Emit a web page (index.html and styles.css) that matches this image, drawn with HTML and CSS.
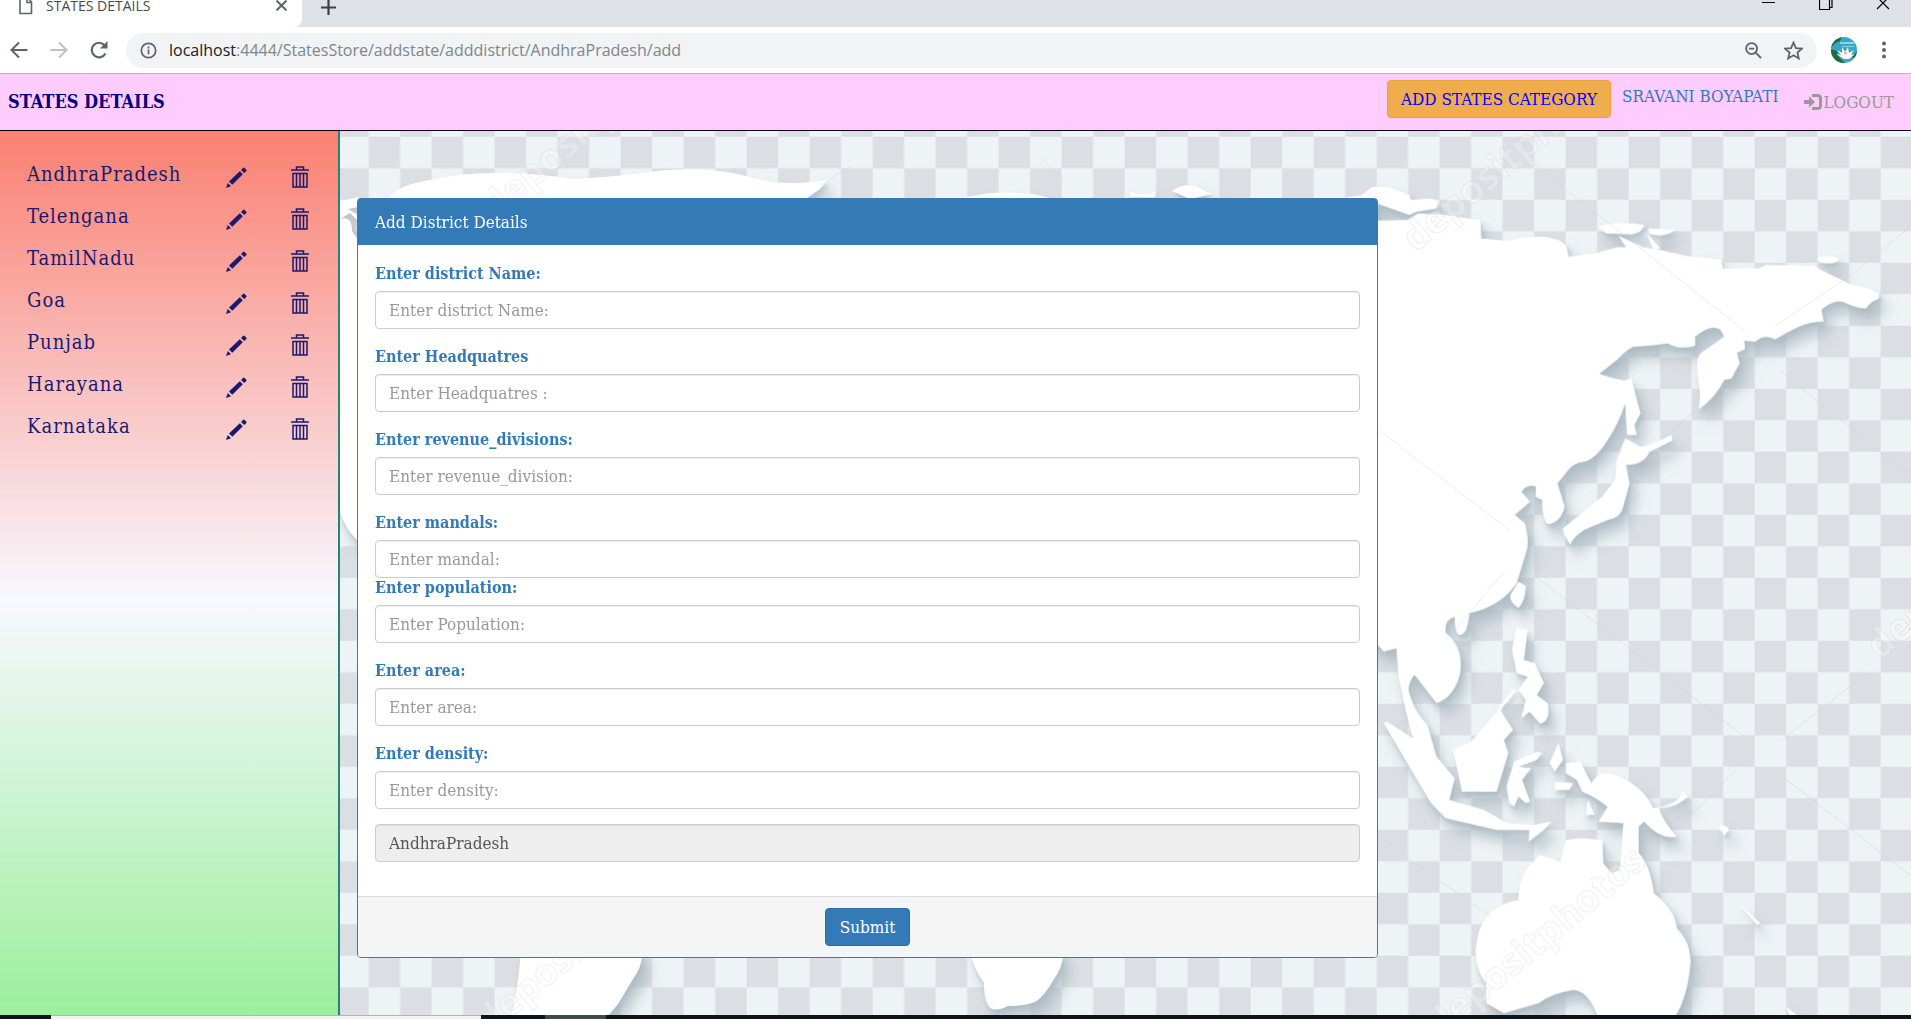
FILE: index.html
```html
<!DOCTYPE html>
<html lang="en">
<head>
<meta charset="utf-8">
<title>STATES DETAILS</title>
<link rel="stylesheet" href="styles.css">
</head>
<body>
<svg class="defs" aria-hidden="true">
  <symbol id="pencil" viewBox="0 0 21 21"><path d="M0 21l1.800-5 3.200 3.200zM3 14.500L13.800 4.300l3 3L6.300 17.800zM15 3L17 1q.8-.8 1.600 0l1.600 1.600q.8.8 0 1.600L18.200 6z"/></symbol>
  <symbol id="trash" viewBox="0 0 18 22"><path d="M0 4h18M5.500 3.500V1h7v2.500M2 7.500V21h14V7.500zM5.500 8v13M9 8v13M12.500 8v13" fill="none" stroke="currentColor" stroke-width="1.500"/></symbol>
</svg>

<header class="browser">
  <div class="tabstrip">
    <div class="tab">
      <svg class="tab-file" viewBox="0 0 14 18"><path d="M1 0V16.500H12.500V5L8 0M8 0V5.500H12.500" fill="none" stroke="#5f6368" stroke-width="1.600"/></svg>
      <span class="tab-title">STATES DETAILS</span>
      <svg class="tab-close" viewBox="0 0 10 10"><path d="M.5.5l9 9M9.500.5l-9 9" stroke="#5f6368" stroke-width="1.800"/></svg>
    </div>
    <svg class="tab-new" viewBox="0 0 15 15"><path d="M7.500 0v15M0 7.500h15" stroke="#3c4043" stroke-width="2.200"/></svg>
    <div class="window-controls">
      <svg viewBox="0 0 14 14"><path d="M0 6.500h13" stroke="#000"/></svg>
      <svg viewBox="0 0 14 14"><path d="M.5 2.500h10v11H.5zM3 2.500v-2h10v11h-2.500" fill="none" stroke="#000" stroke-width="1.200"/></svg>
      <svg viewBox="0 0 14 14"><path d="M1 1l12 12M13 1L1 13" stroke="#000" stroke-width="1.200"/></svg>
    </div>
  </div>
  <div class="toolbar">
    <svg class="tool" viewBox="0 0 18 18"><path d="M17.500 9H2M9 1.500L1.500 9 9 16.500" fill="none" stroke="#5f6368" stroke-width="2"/></svg>
    <svg class="tool" viewBox="0 0 18 18"><path d="M.5 9H16M9 1.500L16.500 9 9 16.500" fill="none" stroke="#bdc1c6" stroke-width="2"/></svg>
    <svg class="tool" viewBox="0 0 18 18"><path d="M15.500 12.500A7.300 7.300 0 1 1 14.800 4.500" fill="none" stroke="#5f6368" stroke-width="2.200"/><path d="M17.500 0v7.500H10z" fill="#5f6368"/></svg>
    <div class="omnibox">
      <svg class="info" viewBox="0 0 18 18"><circle cx="9" cy="9" r="7.600" fill="none" stroke="#5f6368" stroke-width="1.800"/><path d="M9 8v5M9 4.800v2" stroke="#5f6368" stroke-width="1.800"/></svg>
      <span class="url"><b>localhost</b>:4444/StatesStore/addstate/adddistrict/AndhraPradesh/add</span>
      <svg class="zoom" viewBox="0 0 18 18"><circle cx="7" cy="7" r="5.800" fill="none" stroke="#5f6368" stroke-width="1.900"/><path d="M11.300 11.300L17 17M4.200 7h5.600" stroke="#5f6368" stroke-width="2"/></svg>
      <svg class="star" viewBox="0 0 18 18"><path d="M9 1.500l2.300 5.200 5.700.5-4.300 3.700 1.300 5.600-5-3-5 3 1.300-5.600L1 7.200l5.700-.5z" fill="none" stroke="#5f6368" stroke-width="1.700"/></svg>
    </div>
    <svg class="avatar" viewBox="0 0 26 26"><clipPath id="round"><circle cx="13" cy="13" r="13"/></clipPath><g clip-path="url(#round)"><path fill="#3aa5c4" d="M0 0h26v26H0z"/><path fill="#8fd4e2" d="M9 5h14v2H9zM11 9h12v1H11z"/><path fill="#1f6b3c" d="M0 0h11l-2 4-5 2-4 5zM0 12l6 2 2 6 6 6H0zM20 19l6-4v8z"/><path fill="#fff" d="M13 22L5 17l5 1-4-5 5 3 0-6 3 5 3-5 1 6 5-3-3 5 4-1-6 5z"/><circle cx="14.500" cy="16" r="1.500" fill="#e9b872"/></g></svg>
    <svg class="menu-dots" viewBox="0 0 4 18" fill="#5f6368"><circle cx="2" cy="2.500" r="2"/><circle cx="2" cy="9" r="2"/><circle cx="2" cy="15.500" r="2"/></svg>
  </div>
</header>

<nav class="navbar">
  <a class="brand" href="#">STATES DETAILS</a>
  <a class="btn-add" href="#">ADD STATES CATEGORY</a>
  <a class="user" href="#">SRAVANI BOYAPATI</a>
  <a class="logout" href="#"><svg viewBox="0 0 18 16"><path d="M8 1.500h5.500q3 0 3 3v7q0 3-3 3H8" fill="none" stroke="currentColor" stroke-width="3"/><path d="M0 6h5V2.500L11 8l-6 5.500V10H0z" fill="currentColor"/></svg>LOGOUT</a>
</nav>

<div class="layout">
  <aside class="sidebar">
    <ul class="states">
      <li><a href="#">AndhraPradesh</a><button aria-label="Edit AndhraPradesh"><svg class="pencil"><use href="#pencil"/></svg></button><button aria-label="Delete AndhraPradesh"><svg class="trash"><use href="#trash"/></svg></button></li>
      <li><a href="#">Telengana</a><button aria-label="Edit Telengana"><svg class="pencil"><use href="#pencil"/></svg></button><button aria-label="Delete Telengana"><svg class="trash"><use href="#trash"/></svg></button></li>
      <li><a href="#">TamilNadu</a><button aria-label="Edit TamilNadu"><svg class="pencil"><use href="#pencil"/></svg></button><button aria-label="Delete TamilNadu"><svg class="trash"><use href="#trash"/></svg></button></li>
      <li><a href="#">Goa</a><button aria-label="Edit Goa"><svg class="pencil"><use href="#pencil"/></svg></button><button aria-label="Delete Goa"><svg class="trash"><use href="#trash"/></svg></button></li>
      <li><a href="#">Punjab</a><button aria-label="Edit Punjab"><svg class="pencil"><use href="#pencil"/></svg></button><button aria-label="Delete Punjab"><svg class="trash"><use href="#trash"/></svg></button></li>
      <li><a href="#">Harayana</a><button aria-label="Edit Harayana"><svg class="pencil"><use href="#pencil"/></svg></button><button aria-label="Delete Harayana"><svg class="trash"><use href="#trash"/></svg></button></li>
      <li><a href="#">Karnataka</a><button aria-label="Edit Karnataka"><svg class="pencil"><use href="#pencil"/></svg></button><button aria-label="Delete Karnataka"><svg class="trash"><use href="#trash"/></svg></button></li>
    </ul>
  </aside>

  <main class="content">
    <svg class="map" viewBox="0 0 1571 884" preserveAspectRatio="xMinYMin slice" aria-hidden="true">
      <pattern id="checks" x="28.600" y="5.800" width="63" height="63" patternUnits="userSpaceOnUse">
        <path fill="#eef3f5" d="M0 0h63v63H0z"/><path fill="#dbdfe3" d="M0 0h31.500v31.500H0zM31.500 31.500H63V63H31.500z"/>
      </pattern>
      <path fill="url(#checks)" d="M0 0h1571v884H0z"/>
      <g class="land" fill="#fff">
        <path d="M50 66Q58 54 90 49Q130 40 175 42Q210 44 235 48Q285 45 325 39Q375 36 405 45L432 51Q460 54 488 49L480 58L460 72H50zM604 70L650 62Q690 60 712 68V75H604zM790 61Q805 66 815 61V66H790zM832 60Q842 52 855 55L872 63L850 68zM-5 72L18 66V76L8 78L18 84V90L10 82L0 88Q12 84 12 100L20 112V412Q0 395-5 360z"/>
        <path d="M181 820H302Q303 835 293 848L278 873Q272 880 264 890H170Q178 860 181 820zM625 820H724Q722 838 714 848Q704 866 695 871Q685 875 668 875Q658 880 652 878Q644 874 644 852Q632 835 630 820z"/>
        <g transform="translate(1000 -1) scale(.3642 .3333)">
          <path d="M-300 260L60 195 90 170 130 170 190 195 195 210 250 205 270 215 265 235 210 245 190 255 105 222 100 272 185 270 215 250 290 255 350 265 385 270 388 325 460 333 500 322 560 320 600 330 620 345 628 380 700 370 760 352 820 350 880 360 950 378 1045 388 1052 415 1150 415 1170 405 1300 408 1340 430 1400 462 1450 475 1480 490 1480 505Q1455 515 1445 535Q1425 538 1380 515Q1350 510 1322 540L1328 575Q1290 575 1260 590Q1230 605 1195 628Q1165 610 1140 635L1110 632 1112 658 1090 668 1097 700 1075 745 1055 750Q1030 805 985 838Q992 790 983 750Q975 690 990 670L1055 620 1045 600Q1020 580 975 620L975 648Q930 660 900 640Q850 648 805 650Q780 665 765 685L712 732 745 743 780 752 800 745 825 850 808 885 815 915 788 915 783 820Q765 880 735 930Q700 990 670 995Q640 1000 628 1018L597 1060 617 1130Q605 1180 570 1182Q555 1170 555 1110L537 1100 538 1070Q515 1060 498 1085L522 1115 480 1155 508 1180Q522 1240 510 1270L485 1360Q440 1430 355 1450Q350 1515 330 1515Q315 1515 315 1460Q285 1470 290 1508Q340 1550 330 1630Q315 1700 265 1720L205 1635Q190 1650 188 1680Q200 1740 240 1785L265 1880 315 1945 300 2010 395 2040 460 2080 530 2085 580 2075 560 2100 518 2135 520 2100 430 2100 290 2065 250 2020 190 1910 120 1780 130 1775 200 1825 180 1740 160 1640 155 1555 120 1565 100 1540-300 1540z"/>
          <path d="M710 290Q760 270 835 285Q830 310 800 313L730 310zM845 295L920 298Q900 320 865 315L850 310zM765 318L830 350 790 360zM842 310L880 355 860 360zM1310 385Q1340 370 1370 385Q1365 405 1320 398z"/>
          <path d="M783 925L825 950 850 945 910 915 912 932 850 965Q835 1005 785 1005L795 1060 775 1140Q765 1165 735 1170L690 1190Q650 1205 632 1243Q610 1210 612 1195L720 1100 755 1050 760 990zM490 1355L510 1368Q510 1410 490 1435Q460 1410 470 1390z"/>
          <path d="M485 1495L515 1500 505 1590 535 1600 560 1660 540 1695 570 1720Q580 1770 550 1782L520 1745 498 1765 510 1710 490 1680 515 1640 485 1630 472 1560zM310 1860L360 1835 435 1740 440 1725 475 1680 485 1680 440 1740 475 1800 450 1830 462 1870 430 1985 335 1985zM478 1895L540 1865 555 1870 540 1890 490 1910 525 1915 500 1950 522 2015 510 2020 490 2000 478 2030 465 2020 457 1970zM600 1840L612 1890 590 1925 575 1900zM590 1955L640 1960 630 1980 590 1980zM620 1900L660 1895 690 1960Q705 1925 740 1930Q830 1960 860 2035Q930 2025 940 1985L955 2000Q930 2030 875 2035Q890 2080 925 2120Q880 2130 835 2075L820 2090 820 2170Q850 2200 862 2290Q920 2340 925 2395Q965 2440 962 2500Q955 2600 920 2660H708Q680 2580 640 2580Q580 2590 545 2620L450 2650 402 2620 400 2560Q360 2500 378 2420Q395 2330 490 2310Q490 2260 510 2220L550 2175 605 2195 620 2130 660 2125 720 2130 723 2200 745 2230 768 2220 778 2080 710 2075 735 2030Q700 2000 665 1985L650 1950 620 1930zM680 2010L700 2055H675zM1040 2090Q1060 2080 1068 2100L1055 2118zM1095 2320L1155 2380 1145 2385zM1225 2630L1260 2660H1235z"/>
        </g>
      </g>
      <path d="M1040 300L1170 400M1105 510L1165 440M1190 30L1405 200M1435 195L1510 145L1571 95M1320 310L1355 280M1440 240L1571 345M1195 445L1410 610M1435 640L1571 745M1350 685L1400 635M1440 610L1530 540M1030 700L1150 785M700 26L725 50M480 55L510 35" fill="none" stroke="#ccd0d4" stroke-opacity=".4"/>
      <g class="watermark">
        <text x="1100" y="908" transform="rotate(-40 1100 908)">depositphotos</text>
        <text x="1076" y="122" transform="rotate(-40 1076 122)">depositphotos</text>
        <text x="155" y="90" transform="rotate(-40 155 90)">depositphotos</text>
        <text x="150" y="905" transform="rotate(-40 150 905)">depositphotos</text>
        <text x="1540" y="530" transform="rotate(-40 1540 530)">depositphotos</text>
      </g>
    </svg>

    <form class="panel">
      <h1 class="panel-heading">Add District Details</h1>
      <div class="panel-body">
        <div class="group"><label for="name">Enter district Name:</label><input id="name" placeholder="Enter district Name:"></div>
        <div class="group"><label for="hq">Enter Headquatres</label><input id="hq" placeholder="Enter Headquatres :"></div>
        <div class="group"><label for="revenue">Enter revenue_divisions:</label><input id="revenue" placeholder="Enter revenue_division:"></div>
        <div class="group group-tight"><label for="mandals">Enter mandals:</label><input id="mandals" placeholder="Enter mandal:"></div>
        <div class="group"><label for="population">Enter population:</label><input id="population" placeholder="Enter Population:"></div>
        <div class="group"><label for="area">Enter area:</label><input id="area" placeholder="Enter area:"></div>
        <div class="group"><label for="density">Enter density:</label><input id="density" placeholder="Enter density:"></div>
        <div class="group"><input aria-label="State" value="AndhraPradesh" readonly></div>
      </div>
      <div class="panel-footer"><button class="submit" type="button">Submit</button></div>
    </form>
  </main>
</div>
<footer class="taskbar"><span class="search"></span><span class="active"></span></footer>
</body>
</html>
```
FILE: styles.css
```css
* { box-sizing: border-box; }
body {
  margin: 0;
  min-height: 100vh;
  display: flex;
  flex-direction: column;
  font: 17px/24px "DejaVu Serif Condensed", "DejaVu Serif", serif;
  color: #333;
}
a { text-decoration: none; color: inherit; }
svg { display: block; flex: none; }
.defs { position: absolute; width: 0; height: 0; }

.browser { font-family: "Open Sans", sans-serif; background: #fff; border-bottom: 1px solid #b6b6b8; }
.tabstrip { display: flex; height: 27px; background: #dee1e6; }
.tab { display: flex; align-items: center; width: 302px; padding: 0 15px 16px 19px; background: #fff; border-radius: 0 0 8px 0; }
.tab-file { width: 14px; height: 18px; }
.tab-title { flex: 1; margin-left: 13px; font-size: 14px; line-height: 20px; color: #45494d; }
.tab-close { width: 11px; height: 11px; }
.tab-new { width: 15px; height: 15px; margin-left: 19px; }
.window-controls { display: flex; gap: 43px; margin: -4px 21px 0 auto; }
.window-controls svg { width: 14px; height: 14px; }
.toolbar { display: flex; align-items: center; height: 46px; padding: 0 25px 0 10px; }
.tool { width: 18px; height: 18px; margin-right: 22px; }
.omnibox { display: flex; align-items: center; flex: 1; height: 35px; margin-left: -4px; padding: 0 14px; border-radius: 18px; background: #f1f3f4; }
.info { width: 17px; height: 17px; margin-right: 12px; }
.url { flex: 1; font-size: 16px; color: #80868b; }
.url b { font-weight: 400; color: #202124; }
.zoom { width: 17px; height: 17px; margin-right: 22px; }
.star { width: 19px; height: 19px; }
.avatar { width: 26px; height: 26px; margin: 0 25px 0 14px; }
.menu-dots { width: 4px; height: 18px; }

.navbar { display: flex; align-items: flex-start; height: 57px; padding: 6px 17px 0 8px; background: #fcf; border-bottom: 1px solid #000; }
.brand { flex: 1; padding-top: 10px; font-size: 18px; font-weight: 700; color: #000080; }
.btn-add { padding: 6px 13px; border: 1px solid #eea236; border-radius: 4px; background: #f0ad4e; color: #00f; }
.user { margin: 4px 26px 0 11px; color: #337ab7; }
.logout { display: flex; align-items: center; gap: 1px; padding-top: 10px; color: #999; }
.logout svg { width: 18px; height: 16px; }

.layout { display: flex; flex: 1; }
.sidebar { flex: 0 0 340px; padding: 22px 0; border-right: 2px solid #2a8277; background: linear-gradient(salmon, ghostwhite 53%, lightgreen 106%); }
.states { margin: 0; padding: 0 29px 0 27px; list-style: none; color: #191970; }
.states li { display: flex; align-items: center; height: 42px; }
.states a { flex: 1; font-size: 20px; letter-spacing: 1px; }
.states button { padding: 6px 0 0; border: 0; background: none; color: inherit; }
.states button + button { margin-left: 44px; }
.pencil { width: 21px; height: 21px; fill: currentColor; }
.trash { width: 18px; height: 22px; }

.content { position: relative; flex: 1; }
.map { position: absolute; inset: 0; width: 100%; height: 100%; }
.land { filter: drop-shadow(2px 4px 2px #a9b8c0aa) drop-shadow(6px 10px 6px #a3b4bfaa); }
.watermark { font: 700 38px "Open Sans", sans-serif; fill: #ffffff44; stroke: #d5d5d8; stroke-opacity: .4; }

.panel { position: relative; width: 65%; margin: 67px 0 57px 17px; border: 1px solid #337ab7; border-radius: 4px; background: #fff; }
.panel-heading { margin: 0; padding: 11px 17px; background: #337ab7; color: #fff; font-size: 17px; font-weight: 400; line-height: 24px; }
.panel-body { padding: 16px 17px 19px; }
.group { margin-bottom: 15px; }
.group-tight { margin-bottom: -3px; }
label { display: block; padding-top: 1px; margin-bottom: 5px; font-size: 16px; font-weight: 700; color: #337ab7; }
input { display: block; width: 100%; height: 38px; padding: 0 13px; border: 1px solid #ccc; border-radius: 4px; font: inherit; color: #555; box-shadow: inset 0 1px 1px #00000013; }
input::placeholder { color: #999; opacity: 1; }
input:read-only { background: #eee; }
.panel-footer { padding: 11px; border-top: 1px solid #ddd; border-radius: 0 0 3px 3px; background: #f5f5f5; text-align: center; }
.submit { height: 38px; padding: 0 14px; border: 1px solid #2e6da4; border-radius: 4px; background: #337ab7; color: #fff; font: inherit; }

.taskbar { display: flex; height: 4px; padding-left: 51px; background: #0b151b; }
.search { width: 430px; background: #f2f2f2; border-top: 1px solid #b4b4b4; }
.active { width: 61px; margin-left: 64px; background: #3f4b4f; }
```
